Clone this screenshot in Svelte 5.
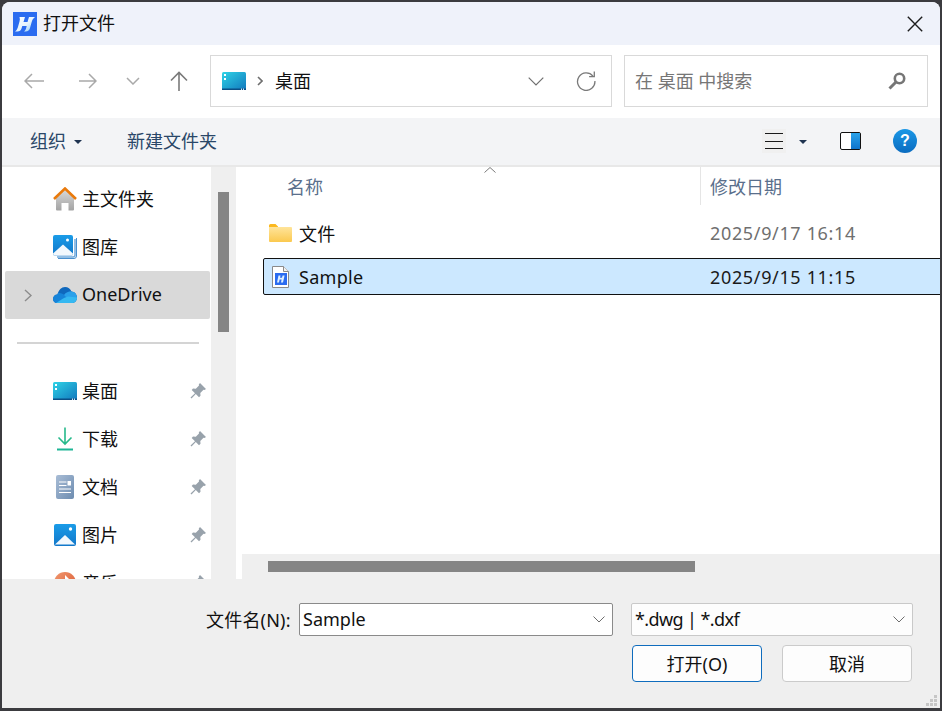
<script>
	const quick = [
		{ icon: 'home', label: '主文件夹' },
		{ icon: 'gallery', label: '图库' },
		{ icon: 'cloud', label: 'OneDrive', active: true, expand: true }
	];
	const pinned = [
		{ icon: 'desktop', label: '桌面' },
		{ icon: 'download', label: '下载' },
		{ icon: 'doc', label: '文档' },
		{ icon: 'picture', label: '图片' },
		{ icon: 'music', label: '音乐' }
	];
	const gripDots = [
		[8, 0], [4, 4], [8, 4], [0, 8], [4, 8], [8, 8]
	];
</script>

{#snippet desktopIcon(id)}
	<svg width="24" height="18" viewBox="0 0 24 18">
		<defs>
			<linearGradient {id} x1="0" y1="0" x2="1" y2="1">
				<stop offset="0" stop-color="#2fd3e6" />
				<stop offset="1" stop-color="#1178bd" />
			</linearGradient>
		</defs>
		<rect width="24" height="18" rx="1.5" fill="url(#{id})" />
		<rect y="16.5" width="24" height="1.5" fill="#0b4f86" />
		<rect x="2" y="2" width="2" height="2" fill="#fff" />
		<rect x="2" y="6" width="2" height="2" fill="#fff" />
		<rect x="19" y="16.5" width="1" height="1.5" fill="#cfe8f5" />
		<rect x="21" y="16.5" width="1" height="1.5" fill="#cfe8f5" />
	</svg>
{/snippet}

{#snippet navIcon(name)}
	{#if name === 'home'}
		<svg width="24" height="24" viewBox="0 0 24 24">
			<defs>
				<linearGradient id="home-wall" x1="0" y1="0" x2="0" y2="1">
					<stop offset="0" stop-color="#d8d8d8" />
					<stop offset="1" stop-color="#a3a3a3" />
				</linearGradient>
			</defs>
			<path d="M3 11 12 3l9 8v11.5a1 1 0 0 1-1 1h-4.500V16h-7v7.500H4a1 1 0 0 1-1-1z" fill="url(#home-wall)" />
			<path d="M1 12 12 1.500 23 12" fill="none" stroke="#e97a0c" stroke-width="2.600" />
		</svg>
	{:else if name === 'gallery'}
		<svg width="24" height="24" viewBox="0 0 24 24">
			<defs>
				<linearGradient id="gal-sky" x1="0" y1="0" x2="0" y2="1">
					<stop offset="0" stop-color="#1a9ce8" />
					<stop offset="1" stop-color="#1277c9" />
				</linearGradient>
			</defs>
			<path d="M23.500 3v18a2.500 2.500 0 0 1-2.500 2.500H5" fill="none" stroke="#4a90cf" stroke-width="1" />
			<path d="M22 4v16a2 2 0 0 1-2 2H4" fill="none" stroke="#6fa9dc" stroke-width="1.500" />
			<rect width="20" height="20.500" rx="2" fill="url(#gal-sky)" />
			<path d="M0 18.500 10 9.500l10 9a2 2 0 0 1-2 2H2a2 2 0 0 1-2-2z" fill="#f2f8fd" />
			<circle cx="14.500" cy="5" r="1.500" fill="#fff" />
		</svg>
	{:else if name === 'cloud'}
		<svg width="24" height="16" viewBox="0 0 24 16">
			<defs>
				<clipPath id="cloud-shape">
					<path d="M4 16C1.500 16 0 14 0 12c0-2.500 2-4.500 4.500-4.500C5.500 3 8.500 0 12 0c3 0 5.500 1.800 6.500 4.500C21.500 4.800 24 7 24 10.500 24 13.500 22 16 19.500 16z" />
				</clipPath>
			</defs>
			<g clip-path="url(#cloud-shape)">
				<rect width="24" height="16" fill="#0f68bd" />
				<path d="M0 6c3-1 7-.5 10 1l8 6-5 3H0z" fill="#1684d9" />
				<path d="M11 8c2-3 5-4 8-3.800L25 4v8l-8 2z" fill="#2aa0ea" />
				<path d="M3 16l8-5 4-1.500 9 1V16z" fill="#35b8f1" />
			</g>
		</svg>
	{:else if name === 'desktop'}
		{@render desktopIcon('side-desk')}
	{:else if name === 'download'}
		<svg width="16" height="24" viewBox="0 0 16 24">
			<path d="M8 .5V17M1.500 10.500 8 17l6.500-6.500" fill="none" stroke="#26b98b" stroke-width="1.600" />
			<rect y="21.500" width="16" height="2" fill="#1db595" />
		</svg>
	{:else if name === 'doc'}
		<svg width="18" height="24" viewBox="0 0 18 24">
			<defs>
				<linearGradient id="doc-bg" x1="0" y1="0" x2="1" y2="1">
					<stop offset="0" stop-color="#a9bdd6" />
					<stop offset="1" stop-color="#6d8cb0" />
				</linearGradient>
			</defs>
			<rect width="18" height="24" rx="2" fill="url(#doc-bg)" />
			<path d="M3 7h7.500M3 10.500h7.500M3 14h12M3 17.500h12" stroke="#fff" stroke-width="1" />
			<rect x="11.500" y="6" width="3.500" height="4.500" fill="#fff" />
		</svg>
	{:else if name === 'picture'}
		<svg width="22" height="22" viewBox="0 0 22 22">
			<defs>
				<linearGradient id="pic-sky" x1="0" y1="0" x2="0" y2="1">
					<stop offset="0" stop-color="#1a9ce8" />
					<stop offset="1" stop-color="#1277c9" />
				</linearGradient>
			</defs>
			<rect width="22" height="22" rx="2" fill="url(#pic-sky)" />
			<path d="M1 20.500 11 11l10 9.500z" fill="#f2f8fd" />
			<circle cx="16.500" cy="5" r="1.700" fill="#fff" />
		</svg>
	{:else if name === 'music'}
		<svg width="22" height="22" viewBox="0 0 22 22">
			<defs>
				<linearGradient id="music-bg" x1="0" y1="0" x2="1" y2="1">
					<stop offset="0" stop-color="#f0986f" />
					<stop offset="1" stop-color="#d9562f" />
				</linearGradient>
			</defs>
			<circle cx="11" cy="11" r="11" fill="url(#music-bg)" />
			<path d="M11 3v10h4V7z" fill="#fff" />
		</svg>
	{/if}
{/snippet}

{#snippet logo()}
	<svg width="24" height="24" viewBox="0 0 24 24">
		<defs>
			<linearGradient id="logo-h" x1="0" y1="0" x2="1" y2="1">
				<stop offset="0" stop-color="#ffffff" />
				<stop offset="0.55" stop-color="#e4f3fd" />
				<stop offset="1" stop-color="#86c8f5" />
			</linearGradient>
		</defs>
		<rect width="24" height="24" fill="#2b6cf0" />
		<path d="M6.500 5H12l-1.500 5h4L16 5h6c-2 1.500-2.700 3-3.300 5L17 16c-.5 2-2 3.500-4.500 3.500H11c1.300-1 1.800-2 2.200-3.500l.5-2H9.300l-.8 2.500C8 18.300 6.500 19.500 4.500 19.500H2c1.500-1 2.300-2.500 2.800-4l1.700-6c.5-1.500.5-3 0-4.500z" fill="url(#logo-h)" />
	</svg>
{/snippet}

{#snippet pin()}
	<svg class="pin" width="16" height="16" viewBox="0 0 16 16">
		<path d="M10 0 16 6l-1.500 1-1-.2-3.200 3.200.2 2.800L9 14.300 5.800 11 1.500 15.500.5 14.500 5 10.200 1.700 7l1.300-1.500 2.800.2L9 2.500 8.800 1.500z" fill="#98a2ab" />
	</svg>
{/snippet}

{#snippet chevron(cls)}
	<svg class={cls} width="12" height="7" viewBox="0 0 12 7">
		<path d="M.5.500 6 6 11.500.500" fill="none" stroke="#6e6e6e" stroke-width="1" />
	</svg>
{/snippet}

<div class="window">
	<header class="titlebar">
		{@render logo()}
		<span class="title">打开文件</span>
		<svg class="close" width="16" height="16" viewBox="0 0 16 16">
			<path d="M.8.800 15.200 15.200M15.200.800.800 15.200" stroke="#1c1c1c" stroke-width="1.400" />
		</svg>
	</header>

	<div class="nav">
		<div class="nav-buttons">
			<svg class="back" width="20" height="16" viewBox="0 0 20 16">
				<path d="M20 8H1M8 1 1 8l7 7" fill="none" stroke="#a9a9a9" stroke-width="1.500" />
			</svg>
			<svg class="forward" width="18" height="16" viewBox="0 0 18 16">
				<path d="M0 8h17M10 1l7 7-7 7" fill="none" stroke="#a9a9a9" stroke-width="1.500" />
			</svg>
			<svg class="recent" width="14" height="8" viewBox="0 0 14 8">
				<path d="M1 1l6 6 6-6" fill="none" stroke="#a9a9a9" stroke-width="1.500" />
			</svg>
			<svg class="up" width="18" height="20" viewBox="0 0 18 20">
				<path d="M9 20V1.500M1 9.500l8-8 8 8" fill="none" stroke="#7a7a7a" stroke-width="1.600" />
			</svg>
		</div>
		<div class="address">
			{@render desktopIcon('addr-desk')}
			<svg class="crumb" width="6" height="10" viewBox="0 0 6 10">
				<path d="M1 1l4 4-4 4" fill="none" stroke="#6f6f6f" stroke-width="1.600" />
			</svg>
			<span class="path lift">桌面</span>
			<svg class="addr-chevron" width="16" height="9" viewBox="0 0 16 9">
				<path d="M.7.700 8 8 15.300.700" fill="none" stroke="#707070" stroke-width="1.200" />
			</svg>
			<svg class="refresh" width="20" height="20" viewBox="0 0 20 20">
				<path d="M17 5.200A8.700 8.700 0 1 0 18.900 10" fill="none" stroke="#7a7a7a" stroke-width="1.300" />
				<path d="M18.300.500v5.200h-5.200" fill="none" stroke="#7a7a7a" stroke-width="1.300" />
			</svg>
		</div>
		<div class="search">
			<span class="placeholder lift">在 桌面 中搜索</span>
			<svg width="18" height="18" viewBox="0 0 18 18">
				<circle cx="11.500" cy="6.500" r="4.700" fill="none" stroke="#767676" stroke-width="2.600" />
				<path d="M8 10 1.500 16.500" stroke="#767676" stroke-width="3" />
			</svg>
		</div>
	</div>

	<div class="toolbar">
		<span class="tool lift">组织</span>
		<span class="caret"></span>
		<span class="tool lift new-folder">新建文件夹</span>
		<span class="view-btn">
			<svg width="18" height="16" viewBox="0 0 18 16">
				<path d="M0 .500h18M0 8.500h18M0 15.500h18" stroke="#1a1a1a" stroke-width="1" />
			</svg>
		</span>
		<span class="caret view-caret"></span>
		<span class="pane"><span class="pane-fill"></span></span>
		<span class="help">?</span>
	</div>

	<div class="main">
		<aside class="sidebar">
			{#each quick as item}
				<div class="side-row" class:active={item.active}>
					<span class="expander">
						{#if item.expand}
							<svg width="8" height="13" viewBox="0 0 8 13">
								<path d="M1 1l6 5.500L1 12" fill="none" stroke="#8c8c8c" stroke-width="1.400" />
							</svg>
						{/if}
					</span>
					<span class="side-icon">{@render navIcon(item.icon)}</span>
					<span class="lift">{item.label}</span>
				</div>
			{/each}
			<div class="side-sep"><hr /></div>
			{#each pinned as item}
				<div class="side-row">
					<span class="expander"></span>
					<span class="side-icon">{@render navIcon(item.icon)}</span>
					<span class="lift">{item.label}</span>
					{@render pin()}
				</div>
			{/each}
		</aside>
		<div class="side-scroll"><div class="side-thumb"></div></div>

		<section class="content">
			<div class="files">
				<svg class="sort" width="12" height="6" viewBox="0 0 12 6">
					<path d="M.5 5.500 6 .5l5.500 5" fill="none" stroke="#7a7a7a" stroke-width="1" />
				</svg>
				<div class="col-head">
					<div class="col-name">名称</div>
					<div class="col-date">修改日期</div>
				</div>
				<div class="file">
					<span class="file-icon">
						<svg width="23" height="18" viewBox="0 0 23 18">
							<defs>
								<linearGradient id="folder-bg" x1="0" y1="0" x2="0" y2="1">
									<stop offset="0" stop-color="#ffe49a" />
									<stop offset="1" stop-color="#fbc94f" />
								</linearGradient>
							</defs>
							<path d="M0 1.500A1.500 1.500 0 0 1 1.500 0h5L9 2.500v2H0z" fill="#fbb81f" />
							<path d="M0 3h22a1 1 0 0 1 1 1v13a1 1 0 0 1-1 1H1a1 1 0 0 1-1-1z" fill="url(#folder-bg)" />
						</svg>
					</span>
					<span class="file-name">文件</span>
					<span class="file-date">2025/9/17 16:14</span>
				</div>
				<div class="file selected">
					<span class="file-icon doc-file">
						<svg width="17" height="22" viewBox="0 0 17 22">
							<path d="M.5.500h11l5 5v16H.5z" fill="#fff" stroke="#8a8a8a" />
							<path d="M11.500.500v5h5" fill="#f0f0f0" stroke="#8a8a8a" />
							<rect x="3" y="7" width="12" height="12" fill="#2b6cf0" />
							<path d="M6.500 9.500h2l-.5 2.300h2l.6-2.300h2L11 16.500H9l.6-3H7.600L7 16.500H5z" fill="#dff0ff" />
						</svg>
					</span>
					<span class="file-name">Sample</span>
					<span class="file-date">2025/9/15 11:15</span>
				</div>
			</div>
			<div class="h-scroll"><div class="h-thumb"></div></div>
		</section>
	</div>

	<footer class="footer">
		<div class="footer-row">
			<span class="field-label lift">文件名(N):</span>
			<div class="combo name-combo">
				<span class="lift">Sample</span>
				{@render chevron('combo-arrow')}
			</div>
			<div class="combo type-combo">
				<span class="lift type-text">*.dwg | *.dxf</span>
				{@render chevron('combo-arrow')}
			</div>
		</div>
		<div class="footer-row buttons">
			<button class="primary">打开(O)</button>
			<button>取消</button>
		</div>
		<svg class="grip" width="12" height="12" viewBox="0 0 12 12">
			{#each gripDots as [x, y]}
				<rect {x} {y} width="3" height="3" fill="#c6c6c6" />
			{/each}
		</svg>
	</footer>
</div>

<style>
	:global(body) {
		background: #3b3b3f;
	}
	.window {
		position: relative;
		box-sizing: border-box;
		width: 938px;
		height: 706px;
		margin: 2px;
		display: flex;
		flex-direction: column;
		background: #fff;
		border-radius: 8px 8px 0 0;
		overflow: hidden;
		font-family: 'Noto Sans', 'Noto Sans CJK SC', sans-serif;
		font-size: 18px;
		color: #111;
	}
	svg {
		display: block;
		flex: none;
	}
	.lift {
		margin-bottom: 2px;
	}

	.titlebar {
		height: 43px;
		flex: none;
		display: flex;
		align-items: center;
		padding-left: 11px;
		background: #eff2fa;
	}
	.title {
		margin-left: 6px;
		margin-bottom: 4px;
	}
	.close {
		margin-left: auto;
		margin-right: 17px;
	}

	.nav {
		height: 73px;
		flex: none;
		display: flex;
		align-items: flex-start;
		padding-top: 10px;
		box-sizing: border-box;
	}
	.nav-buttons {
		width: 208px;
		height: 52px;
		flex: none;
		display: flex;
		align-items: center;
	}
	.back {
		margin-left: 22px;
	}
	.forward {
		margin-left: 35px;
	}
	.recent {
		margin-left: 29px;
	}
	.up {
		margin-left: 30px;
	}
	.address,
	.search {
		box-sizing: border-box;
		height: 52px;
		display: flex;
		align-items: center;
		border: 1px solid #d9d9d9;
	}
	.address {
		width: 402px;
		padding-left: 11px;
	}
	.crumb {
		margin-left: 11px;
	}
	.path {
		margin-left: 12px;
	}
	.addr-chevron {
		margin-left: auto;
	}
	.refresh {
		margin-left: 32px;
		margin-right: 15px;
	}
	.search {
		width: 304px;
		margin-left: 12px;
		padding: 0 21px 0 10px;
		justify-content: space-between;
	}
	.placeholder {
		color: #767676;
	}

	.toolbar {
		height: 49px;
		flex: none;
		box-sizing: border-box;
		display: flex;
		align-items: center;
		padding: 0 0 1px 28px;
		background: #f3f4f6;
		border-bottom: 2px solid #e8e8e8;
	}
	.tool {
		color: #2a4768;
	}
	.caret {
		width: 0;
		height: 0;
		margin-left: 8px;
		margin-top: 1px;
		border: 4px solid transparent;
		border-top: 4px solid #1f3350;
		border-bottom: 0;
	}
	.new-folder {
		margin-left: 45px;
	}
	.view-btn {
		margin-left: auto;
		width: 24px;
		height: 24px;
		display: flex;
		align-items: center;
		justify-content: center;
		background: #f0f0f0;
	}
	.view-caret {
		margin-left: 13px;
	}
	.pane {
		box-sizing: border-box;
		width: 21px;
		height: 18px;
		margin-left: 33px;
		display: flex;
		justify-content: flex-end;
		background: #fff;
		border: 1px solid #111;
		border-radius: 2px;
	}
	.pane-fill {
		width: 9px;
		background: linear-gradient(#2aa3ea, #0f74cc);
	}
	.help {
		width: 24px;
		height: 24px;
		margin-left: 32px;
		margin-right: 23px;
		border-radius: 50%;
		background: linear-gradient(#1a97e6, #0b6cc0);
		color: #fff;
		font-family: 'Liberation Sans', sans-serif;
		font-size: 16px;
		font-weight: 700;
		line-height: 24px;
		text-align: center;
	}

	.main {
		flex: 1;
		min-height: 0;
		display: flex;
	}
	.sidebar {
		width: 209px;
		flex: none;
		padding-top: 8px;
		box-sizing: border-box;
		overflow: hidden;
	}
	.side-row {
		height: 48px;
		margin: 0 1px 0 3px;
		display: flex;
		align-items: center;
		border-radius: 2px;
	}
	.side-row.active {
		background: #d9d9d9;
	}
	.expander {
		width: 27px;
		flex: none;
		display: flex;
		justify-content: flex-end;
	}
	.side-icon {
		width: 24px;
		margin-left: 21px;
		margin-right: 5px;
		flex: none;
		display: flex;
		justify-content: center;
	}
	.side-sep {
		height: 48px;
		display: flex;
		align-items: center;
		padding: 0 12px 0 15px;
	}
	.side-sep hr {
		flex: 1;
		height: 2px;
		margin: 0;
		border: 0;
		background: #d4d4d4;
	}
	.pin {
		margin-left: auto;
		margin-right: 4px;
	}
	.side-scroll {
		width: 25px;
		flex: none;
		background: #efefef;
	}
	.side-thumb {
		width: 11px;
		height: 140px;
		margin: 25px 0 0 7px;
		background: #858585;
	}

	.content {
		flex: 1;
		min-width: 0;
		display: flex;
		flex-direction: column;
		padding-left: 6px;
	}
	.files {
		position: relative;
		flex: 1;
		overflow: hidden;
	}
	.sort {
		position: absolute;
		left: 242px;
		top: 0;
	}
	.col-head {
		display: flex;
		height: 38px;
		align-items: stretch;
		color: #5a6f8c;
		margin-bottom: 9px;
		line-height: 40px;
	}
	.col-name {
		width: 459px;
		box-sizing: border-box;
		padding-left: 45px;
		border-right: 1px solid #e5e5e5;
	}
	.col-date {
		padding-left: 9px;
	}
	.file {
		box-sizing: border-box;
		height: 37px;
		margin: 0 -4px 7px 21px;
		display: grid;
		grid-template-columns: 35px 411px 1fr;
		align-items: center;
		border: 1px solid transparent;
	}
	.file.selected {
		background: #cce8ff;
		border-color: #111;
		border-radius: 2px 0 0 2px;
	}
	.file-icon {
		padding-left: 5px;
	}
	.doc-file {
		padding-left: 8px;
	}
	.file-name {
		letter-spacing: 0.3px;
	}
	.file-date {
		color: #6f6f6f;
		letter-spacing: 0.65px;
	}
	.selected .file-date {
		color: #1a1a1a;
	}
	.h-scroll {
		height: 25px;
		flex: none;
		background: #efefef;
		padding: 7px 0 0 26px;
		box-sizing: border-box;
	}
	.h-thumb {
		width: 427px;
		height: 11px;
		background: #858585;
	}

	.footer {
		position: relative;
		height: 129px;
		flex: none;
		box-sizing: border-box;
		padding: 24px 0 0 204px;
		background: #efefef;
	}
	.footer-row {
		display: flex;
		align-items: center;
	}
	.field-label {
		width: 93px;
		flex: none;
		letter-spacing: 0.2px;
	}
	.combo {
		box-sizing: border-box;
		height: 33px;
		display: flex;
		align-items: center;
		justify-content: space-between;
		padding: 0 7px 0 3px;
		border-radius: 2px;
	}
	.name-combo {
		width: 314px;
		background: #fff;
		border: 1px solid #8a8a8a;
	}
	.type-combo {
		width: 282px;
		margin-left: 18px;
		background: #fdfdfd;
		border: 1px solid #c9c9c9;
	}
	.type-text {
		letter-spacing: -0.6px;
	}
	.buttons {
		margin-top: 9px;
		padding-left: 426px;
		gap: 20px;
	}
	button {
		box-sizing: border-box;
		width: 130px;
		height: 37px;
		padding: 0 0 2px;
		background: #fdfdfd;
		border: 1px solid #cbcbcb;
		border-radius: 4px;
		font: inherit;
		color: inherit;
	}
	button.primary {
		border-color: #0f6cbd;
	}
	.grip {
		position: absolute;
		right: 2px;
		bottom: 1px;
	}
</style>
